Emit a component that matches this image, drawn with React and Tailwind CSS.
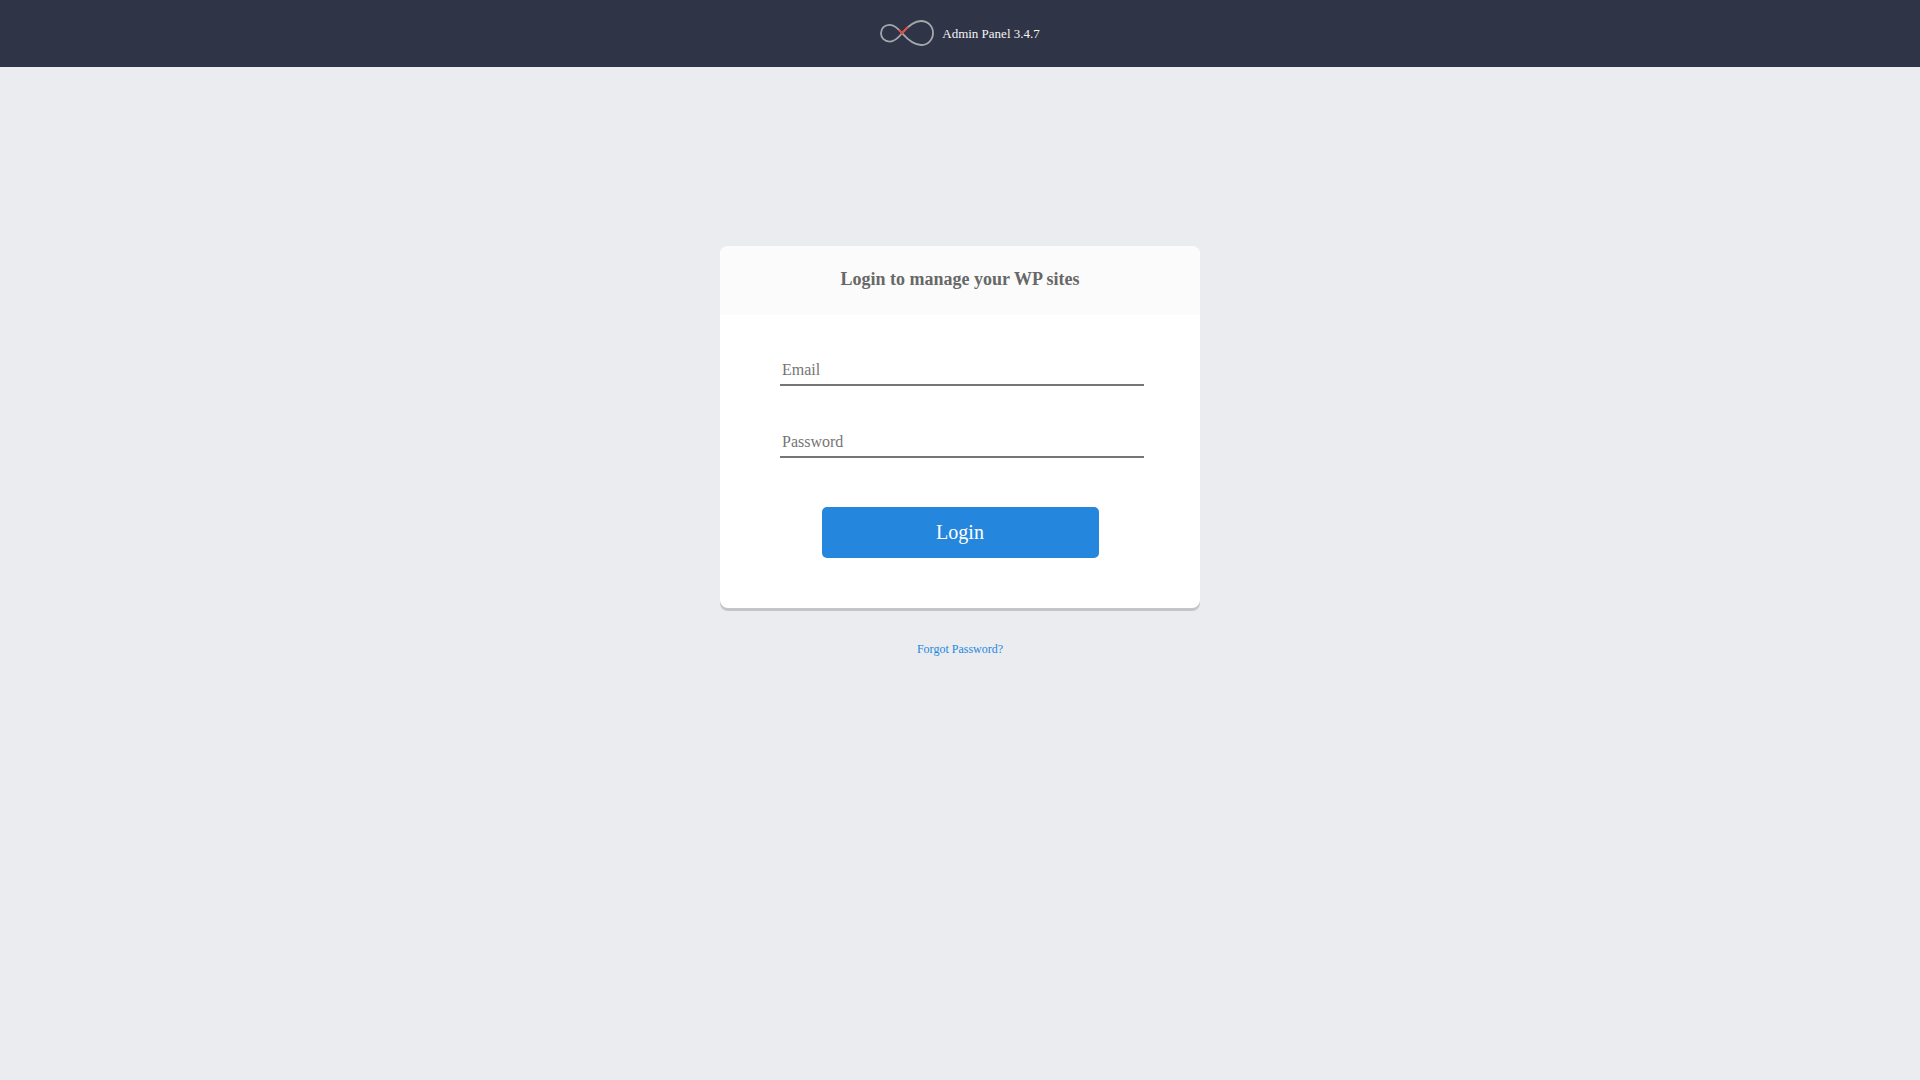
import React from 'react';

const Logo = () => (
  <svg width="54" height="27" viewBox="0 0 54 27" fill="none" strokeWidth="1.8" aria-hidden="true">
    <path
      d="M22 13.2C18 8.2 14.4 4.8 9.6 4.8C4.6 4.8 1 8.4 1 13.2C1 18 4.6 21.6 9.6 21.6C14.4 21.6 18 18.2 22 13.2C28.5 5.6 34 1 41 1C47.8 1 53 6.2 53 13C53 19.8 47.8 25 41 25C34 25 28.5 20.6 22 13.2Z"
      stroke="#a4a8ac"
    />
    <path d="M18.8 9.7L22 13.2L28.2 6.9" stroke="#e04b3f" />
    <circle cx="22" cy="13.2" r="1.2" fill="#e04b3f" />
  </svg>
);

const fields = [
  { id: 'email', type: 'email', label: 'Email' },
  { id: 'password', type: 'password', label: 'Password' },
];

const LoginCard = () => (
  <form
    onSubmit={(e) => e.preventDefault()}
    className="w-full max-w-[480px] rounded-lg bg-white shadow-[0_3px_0_#c4c5c9]"
  >
    <div className="rounded-t-lg bg-[#fbfbfb] pt-5 pb-6 text-center">
      <h1 className="pt-px text-[18px] leading-6 font-bold text-[#686868]">Login to manage your WP sites</h1>
    </div>

    <div className="flex flex-col gap-8 pt-[31px] pr-14 pl-15">
      {fields.map((field) => (
        <input
          key={field.id}
          id={field.id}
          type={field.type}
          placeholder={field.label}
          aria-label={field.label}
          className="h-10 w-full border-b-2 border-[#757575] px-0.5 pt-2.5 pb-0 text-base text-[#666666] outline-none placeholder:text-[#757575]"
        />
      ))}
    </div>

    <div className="flex justify-center pt-[49px] pb-[50px]">
      <button type="submit" className="h-[51px] w-[277px] rounded-[5px] bg-[#2487dd] pb-0.5 text-xl text-white">
        Login
      </button>
    </div>
  </form>
);

const App = () => {
  return (
    <div className="min-h-screen bg-[#ebecf0] font-['Liberation_Serif','Times_New_Roman',serif]">
      <header className="flex h-[67px] items-center justify-center gap-2 bg-[#2f3447]">
        <Logo />
        <span className="text-[13px] text-[#f5f5f5]">Admin Panel 3.4.7</span>
      </header>

      <main className="flex flex-col items-center pt-[179px]">
        <LoginCard />
        <a href="#forgot" className="mt-[33px] text-xs leading-4 text-[#2487dd]">
          Forgot Password?
        </a>
      </main>
    </div>
  );
};

export default App;
